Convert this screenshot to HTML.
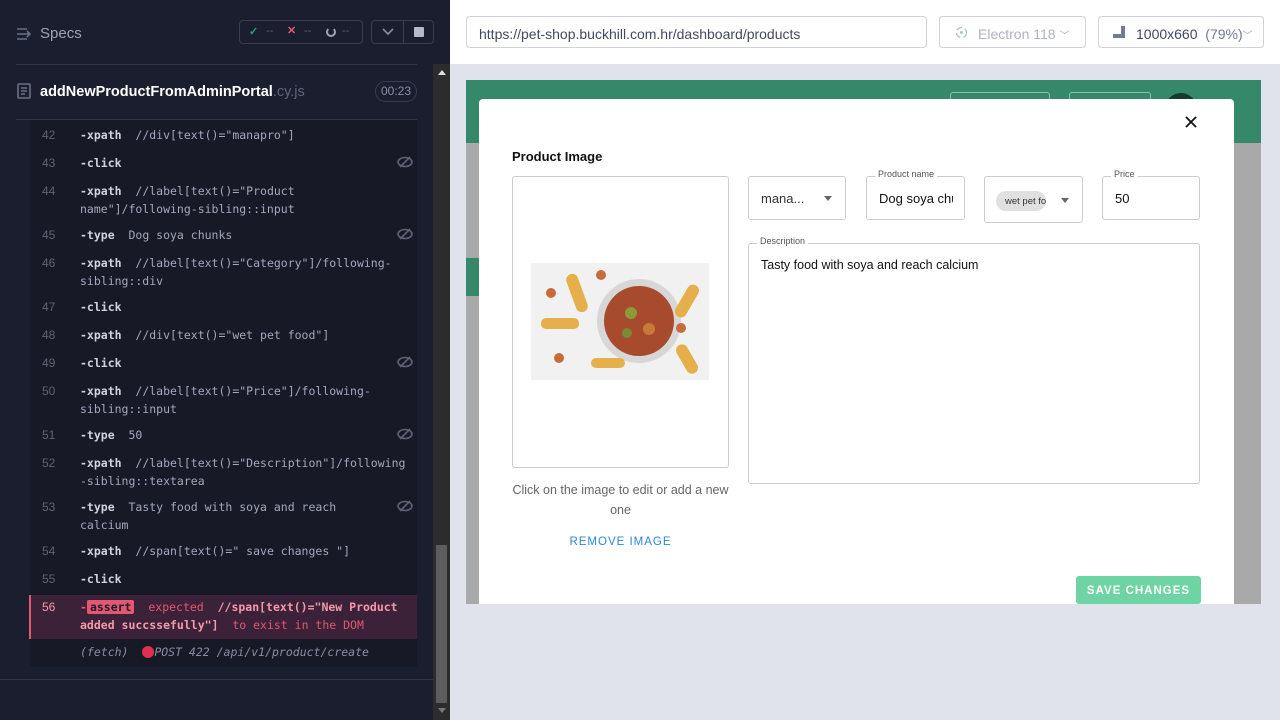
<!DOCTYPE html>
<html><head><style>
*{box-sizing:border-box;margin:0;padding:0}
body{width:1280px;height:720px;overflow:hidden;font-family:"Liberation Sans",sans-serif;background:#e1e3ec;position:relative}
.abs{position:absolute}
#left{left:0;top:0;width:450px;height:720px;background:#1b1e2e}
.mono{font-family:"DejaVu Sans Mono","Liberation Mono",monospace;font-size:11.5px}
.ln{position:absolute;left:30px;width:387px;color:#b6b9c9}
.num{position:absolute;left:12px;color:#5e6378;font-size:12px;font-family:"Liberation Sans",sans-serif}
.cmd{position:absolute;left:50px;color:#d0d2e0;font-weight:bold}
.arg{color:#a3a8be;font-weight:normal}
.eye{position:absolute;right:4px;width:16px;height:12px}
</style></head><body>
<div id="left" class="abs">
 <div class="abs" style="left:17px;top:27px;width:16px;height:12px">
  <svg width="16" height="12"><path d="M0 1h10M0 6h8M0 11h10M10 3l3 3-3 3M8 6h5" stroke="#6b7086" stroke-width="1.6" fill="none"/></svg></div>
 <div class="abs" style="left:40px;top:25px;font-size:15px;color:#a0a3b5">Specs</div>
 <div class="abs" style="left:239px;top:20px;width:124px;height:24px;border:1px solid #3a3e52;border-radius:4px;font-size:11px;color:#5e6378">
  <span class="abs" style="left:9px;top:4px;color:#1fa971;font-weight:bold">✓</span><span class="abs" style="left:26px;top:4px">--</span>
  <span class="abs" style="left:47px;top:3px;color:#e45770;font-weight:bold">✕</span><span class="abs" style="left:64px;top:4px">--</span>
  <span class="abs" style="left:86px;top:6px;width:10px;height:10px;border:2px solid #a0a3b5;border-top-color:transparent;border-radius:50%"></span><span class="abs" style="left:102px;top:4px">--</span>
 </div>
 <div class="abs" style="left:371px;top:20px;width:63px;height:24px;border:1px solid #3a3e52;border-radius:4px">
  <div class="abs" style="left:31px;top:0;width:1px;height:22px;background:#3a3e52"></div>
  <svg class="abs" style="left:10px;top:7px" width="12" height="8"><path d="M1 1l5 5 5-5" stroke="#8a8ea3" stroke-width="1.6" fill="none"/></svg>
  <div class="abs" style="left:42px;top:6px;width:10px;height:10px;background:#b6b9c9;border-radius:1px"></div>
 </div>
 <div class="abs" style="left:16px;top:64px;width:401px;height:1px;background:#2f3347"></div>
 <svg class="abs" style="left:17px;top:83px" width="14" height="16"><rect x="1" y="1" width="12" height="14" rx="1" fill="none" stroke="#6b7086" stroke-width="1.6"/><path d="M4 5h6M4 8h6M4 11h4" stroke="#6b7086" stroke-width="1.4"/></svg>
 <div class="abs" style="left:40px;top:84px;font-size:14.5px;color:#fff;font-weight:bold">addNewProductFromAdminPortal<span style="color:#5e6378;font-weight:normal">.cy.js</span></div>
 <div class="abs" style="left:375px;top:81px;width:42px;height:21px;border:1px solid #3a3e52;border-radius:11px;font-size:12px;color:#8a8ea3;text-align:center;line-height:19px">00:23</div>
 <div class="abs" style="left:16px;top:119px;width:401px;height:1px;background:#2f3347"></div>
 <div class="abs" style="left:30px;top:120px;width:387px;height:547px;background:#171926"></div>
 <div class="abs" style="left:0;top:679px;width:433px;height:1px;background:#2f3347"></div>
 <div class="abs" style="left:433px;top:64px;width:17px;height:656px;background:#2c2c2c"></div>
 <div class="abs" style="left:436px;top:545px;width:11px;height:158px;background:#5d5d5d"></div>
 <div class="abs" style="left:438px;top:70px;width:0;height:0;border:4px solid transparent;border-bottom:5px solid #ddd;border-top:0"></div>
 <div class="abs" style="left:438px;top:708px;width:0;height:0;border:4px solid transparent;border-top:5px solid #777;border-bottom:0"></div>

 <div class="mono">
 <div class="ln" style="top:128px"><span class="num">42</span><span class="cmd">-xpath <span class="arg">&nbsp;//div[text()="manapro"]</span></span></div>
 <div class="ln" style="top:156px"><span class="num">43</span><span class="cmd">-click</span><svg class="eye" viewBox="0 0 16 12"><ellipse cx="8" cy="6" rx="7" ry="4.5" fill="none" stroke="#5e6378" stroke-width="1.6"/><path d="M3 11L13 1" stroke="#5e6378" stroke-width="1.6"/></svg></div>
 <div class="ln" style="top:184px"><span class="num">44</span><span class="cmd">-xpath <span class="arg">&nbsp;//label[text()="Product</span></span><span class="cmd arg" style="top:18px">name"]/following-sibling::input</span></div>
 <div class="ln" style="top:228px"><span class="num">45</span><span class="cmd">-type <span class="arg">&nbsp;Dog soya chunks</span></span><svg class="eye" viewBox="0 0 16 12"><ellipse cx="8" cy="6" rx="7" ry="4.5" fill="none" stroke="#5e6378" stroke-width="1.6"/><path d="M3 11L13 1" stroke="#5e6378" stroke-width="1.6"/></svg></div>
 <div class="ln" style="top:256px"><span class="num">46</span><span class="cmd">-xpath <span class="arg">&nbsp;//label[text()="Category"]/following-</span></span><span class="cmd arg" style="top:18px">sibling::div</span></div>
 <div class="ln" style="top:300px"><span class="num">47</span><span class="cmd">-click</span></div>
 <div class="ln" style="top:328px"><span class="num">48</span><span class="cmd">-xpath <span class="arg">&nbsp;//div[text()="wet pet food"]</span></span></div>
 <div class="ln" style="top:356px"><span class="num">49</span><span class="cmd">-click</span><svg class="eye" viewBox="0 0 16 12"><ellipse cx="8" cy="6" rx="7" ry="4.5" fill="none" stroke="#5e6378" stroke-width="1.6"/><path d="M3 11L13 1" stroke="#5e6378" stroke-width="1.6"/></svg></div>
 <div class="ln" style="top:384px"><span class="num">50</span><span class="cmd">-xpath <span class="arg">&nbsp;//label[text()="Price"]/following-</span></span><span class="cmd arg" style="top:18px">sibling::input</span></div>
 <div class="ln" style="top:428px"><span class="num">51</span><span class="cmd">-type <span class="arg">&nbsp;50</span></span><svg class="eye" viewBox="0 0 16 12"><ellipse cx="8" cy="6" rx="7" ry="4.5" fill="none" stroke="#5e6378" stroke-width="1.6"/><path d="M3 11L13 1" stroke="#5e6378" stroke-width="1.6"/></svg></div>
 <div class="ln" style="top:456px"><span class="num">52</span><span class="cmd">-xpath <span class="arg">&nbsp;//label[text()="Description"]/following</span></span><span class="cmd arg" style="top:18px">-sibling::textarea</span></div>
 <div class="ln" style="top:500px"><span class="num">53</span><span class="cmd">-type <span class="arg">&nbsp;Tasty food with soya and reach</span></span><span class="cmd arg" style="top:18px">calcium</span><svg class="eye" viewBox="0 0 16 12"><ellipse cx="8" cy="6" rx="7" ry="4.5" fill="none" stroke="#5e6378" stroke-width="1.6"/><path d="M3 11L13 1" stroke="#5e6378" stroke-width="1.6"/></svg></div>
 <div class="ln" style="top:544px"><span class="num">54</span><span class="cmd">-xpath <span class="arg">&nbsp;//span[text()=" save changes "]</span></span></div>
 <div class="ln" style="top:572px"><span class="num">55</span><span class="cmd">-click</span></div>
 <div class="abs" style="left:29px;top:595px;width:388px;height:44px;background:#3b2238;border-left:2px solid #e45770"></div>
 <div class="ln" style="top:600px;color:#e45770"><span class="num" style="color:#f59aa9">56</span><span class="cmd" style="color:#e45770">-<span style="background:#e45770;color:#1b1e2e;padding:0 3px;border-radius:2px">assert</span> <span style="font-weight:normal">&nbsp;expected </span><span style="color:#f59aa9">&nbsp;//span[text()="New Product</span></span><span class="cmd" style="top:18px;color:#f59aa9">added succssefully"] <span style="color:#e45770;font-weight:normal">&nbsp;to exist in the DOM</span></span></div>
 <div class="ln" style="top:645px;font-style:italic;color:#8a8ea3"><span class="cmd" style="font-weight:normal;color:#8a8ea3">(fetch) &nbsp;<span style="display:inline-block;width:12px;height:12px;border-radius:50%;background:#e0304f;vertical-align:-2px"></span>POST 422 /api/v1/product/create</span></div>
 </div>
</div>

<div class="abs" style="left:450px;top:0;width:830px;height:64px;background:#fff"></div>
<div class="abs" style="left:466px;top:16px;width:461px;height:32px;border:1px solid #d0d2dc;border-radius:4px;font-size:14px;color:#434861;padding:9px 12px">https://pet-shop.buckhill.com.hr/dashboard/products</div>
<div class="abs" style="left:939px;top:16px;width:147px;height:32px;border:1px solid #d0d2dc;border-radius:4px;font-size:14px;color:#b0b3c0;padding:9px 0 0 38px">Electron 118 <span style="font-size:10px">﹀</span>
 <svg class="abs" style="left:14px;top:8px" width="15" height="15"><circle cx="7.5" cy="7.5" r="5" fill="none" stroke="#a9c4c8" stroke-width="1.2" stroke-dasharray="6 3"/><circle cx="7.5" cy="7.5" r="1.5" fill="#a9c4c8"/></svg></div>
<div class="abs" style="left:1098px;top:16px;width:166px;height:32px;border:1px solid #d0d2dc;border-radius:4px;font-size:14px;color:#434861;padding:9px 0 0 37px">1000x660 &nbsp;<span style="color:#747994">(79%)</span><span style="font-size:10px;color:#a0a3b5">﹀</span>
 <svg class="abs" style="left:13px;top:8px" width="14" height="14"><path d="M1 13h12V1h-4v8H1z" fill="#747994"/></svg></div>

<div class="abs" style="left:466px;top:80px;width:795px;height:524px;background:#a9a9a9">
 <div class="abs" style="left:0;top:0;width:795px;height:63px;background:#36886a"></div>
 <div class="abs" style="left:0;top:178px;width:13px;height:38px;background:#36886a"></div>
 <div class="abs" style="left:484px;top:12px;width:100px;height:30px;border:1px solid #8cc0aa;border-radius:3px"></div>
 <div class="abs" style="left:603px;top:12px;width:82px;height:30px;border:1px solid #8cc0aa;border-radius:3px"></div>
 <div class="abs" style="left:699px;top:13px;width:32px;height:32px;border-radius:50%;background:#123d2c"></div>
</div>
<div class="abs" style="left:479px;top:99px;width:755px;height:505px;background:#fff;border-radius:4px 4px 0 0">
 <svg class="abs" style="left:706px;top:17px" width="12" height="12"><path d="M1 1l10 10M11 1L1 11" stroke="#111" stroke-width="1.8"/></svg>
 <div class="abs" style="left:33px;top:50px;font-size:13px;font-weight:bold;color:#111">Product Image</div>
 <div class="abs" style="left:33px;top:77px;width:217px;height:292px;border:1px solid #ccc;border-radius:3px">
  <svg class="abs" style="left:18px;top:86px" width="178" height="117" viewBox="0 0 178 117"><rect width="178" height="117" fill="#f1f1f1"/><circle cx="108" cy="58" r="42" fill="#d7d7d7"/><circle cx="108" cy="58" r="35" fill="#a84b2d"/><circle cx="100" cy="50" r="6" fill="#8c9b3a"/><circle cx="118" cy="66" r="6" fill="#c97a3a"/><circle cx="96" cy="70" r="5" fill="#7b8a34"/><g fill="#e5b04c"><rect x="40" y="10" width="12" height="40" rx="6" transform="rotate(-20 46 30)"/><rect x="10" y="55" width="38" height="11" rx="5"/><rect x="150" y="20" width="12" height="36" rx="6" transform="rotate(30 156 38)"/><rect x="60" y="95" width="34" height="10" rx="5"/><rect x="150" y="80" width="12" height="32" rx="6" transform="rotate(-30 156 96)"/></g><g fill="#c86b3a"><circle cx="20" cy="30" r="5"/><circle cx="70" cy="12" r="5"/><circle cx="28" cy="95" r="5"/><circle cx="150" cy="65" r="5"/></g></svg>
 </div>
 <div class="abs" style="left:33px;top:381px;width:217px;font-size:12.5px;color:#666;text-align:center;line-height:20px">Click on the image to edit or add a new one</div>
 <div class="abs" style="left:33px;top:437px;width:217px;font-size:11.5px;color:#2e86de;text-align:center;letter-spacing:1px">REMOVE IMAGE</div>

 <div class="abs" style="left:269px;top:77px;width:98px;height:44px;border:1px solid #ccc;border-radius:3px;font-size:13px;color:#333;padding:14px 12px">mana...<span class="abs" style="left:75px;top:19px;border:4px solid transparent;border-top:5px solid #666;border-bottom:0"></span></div>
 <div class="abs" style="left:387px;top:77px;width:99px;height:44px;border:1px solid #ccc;border-radius:3px;font-size:13px;color:#111;padding:14px 0 0 12px">
  <div style="width:74px;overflow:hidden;white-space:nowrap">Dog soya chunks</div></div>
 <div class="abs" style="left:396px;top:70px;font-size:9px;color:#555;background:#fff;padding:0 3px">Product name</div>
 <div class="abs" style="left:505px;top:77px;width:99px;height:47px;border:1px solid #ccc;border-radius:3px">
  <div class="abs" style="left:11px;top:14px;width:50px;height:20px;border-radius:10px;background:#e0e0e0;font-size:9.5px;color:#333;padding:5px 0 0 9px;overflow:hidden;white-space:nowrap">wet pet food</div>
  <span class="abs" style="left:76px;top:21px;border:4px solid transparent;border-top:5px solid #666;border-bottom:0"></span></div>
 <div class="abs" style="left:623px;top:77px;width:98px;height:44px;border:1px solid #ccc;border-radius:3px;font-size:13px;color:#111;padding:14px 12px">50</div>
 <div class="abs" style="left:632px;top:70px;font-size:9px;color:#555;background:#fff;padding:0 3px">Price</div>
 <div class="abs" style="left:269px;top:144px;width:452px;height:241px;border:1px solid #ccc;border-radius:3px;font-size:12.5px;color:#111;padding:14px 12px">Tasty food with soya and reach calcium</div>
 <div class="abs" style="left:278px;top:137px;font-size:9px;color:#555;background:#fff;padding:0 3px">Description</div>
 <div class="abs" style="left:597px;top:477px;width:125px;height:28px;background:#6fd4a3;border-radius:3px;color:#fff;font-size:11.5px;font-weight:bold;letter-spacing:1px;text-align:center;line-height:30px">SAVE CHANGES</div>
</div>
</body></html>
